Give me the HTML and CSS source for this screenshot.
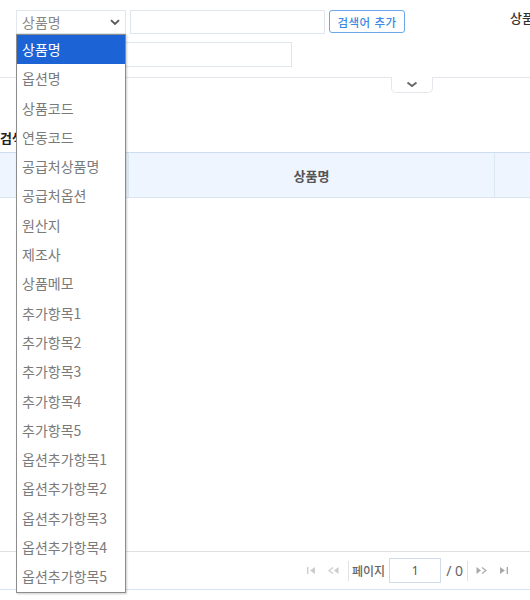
FILE: index.html
```html
<!DOCTYPE html>
<html lang="ko">
<head>
<meta charset="utf-8">
<link rel="stylesheet" href="styles.css">
</head>
<body>
<div class="page">
  <div class="toolbar">
    <div class="select">
      <span class="select-text">상품명</span>
      <svg class="select-chev" width="10" height="7" viewBox="0 0 10 7"><path d="M1 1.2 L5 5 L9 1.2" fill="none" stroke="#555" stroke-width="1.8"/></svg>
    </div>
    <div class="input wide"></div>
    <button class="btn-add">검색어 추가</button>
    <span class="side-label">상품명 검색</span>
  </div>
  <div class="row2">
    <div class="input long"></div>
  </div>
  <div class="fold">
    <div class="fold-tab">
      <svg width="12" height="7" viewBox="0 0 12 7"><path d="M1.5 1.5 L6 5 L10.5 1.5" fill="none" stroke="#666" stroke-width="1.8"/></svg>
    </div>
  </div>
  <div class="section-title">검색 결과</div>
  <div class="grid-head">
    <div class="col c1"></div>
    <div class="col c2">상품명</div>
    <div class="col c3"></div>
  </div>
  <div class="grid-body"></div>
  <div class="pager">
    <span class="pg-icon off">
      <svg width="9" height="7" viewBox="0 0 9 7"><rect x="0" y="0" width="1.4" height="7" fill="#ccc"/><path d="M8 0 L3 3.5 L8 7Z" fill="#ccc"/></svg>
    </span>
    <span class="pg-icon off">
      <svg width="11" height="7" viewBox="0 0 11 7"><path d="M5 0.5 L1 3.5 L5 6.5" fill="none" stroke="#ccc" stroke-width="1.2"/><path d="M10.5 0 L6 3.5 L10.5 7Z" fill="#ccc"/></svg>
    </span>
    <span class="pg-sep"></span>
    <span class="pg-label">페이지</span>
    <div class="pg-input">1</div>
    <span class="pg-total">/ 0</span>
    <span class="pg-sep"></span>
    <span class="pg-icon">
      <svg width="11" height="7" viewBox="0 0 11 7"><path d="M0.5 0 L5 3.5 L0.5 7Z" fill="#aaa"/><path d="M6 0.5 L10 3.5 L6 6.5" fill="none" stroke="#aaa" stroke-width="1.2"/></svg>
    </span>
    <span class="pg-icon">
      <svg width="9" height="7" viewBox="0 0 9 7"><path d="M1 0 L6 3.5 L1 7Z" fill="#aaa"/><rect x="7.6" y="0" width="1.4" height="7" fill="#aaa"/></svg>
    </span>
  </div>

  <ul class="dropdown">
    <li class="selected">상품명</li>
    <li>옵션명</li>
    <li>상품코드</li>
    <li>연동코드</li>
    <li>공급처상품명</li>
    <li>공급처옵션</li>
    <li>원산지</li>
    <li>제조사</li>
    <li>상품메모</li>
    <li>추가항목1</li>
    <li>추가항목2</li>
    <li>추가항목3</li>
    <li>추가항목4</li>
    <li>추가항목5</li>
    <li>옵션추가항목1</li>
    <li>옵션추가항목2</li>
    <li>옵션추가항목3</li>
    <li>옵션추가항목4</li>
    <li>옵션추가항목5</li>
  </ul>
</div>
</body>
</html>
```

FILE: styles.css
```css
html, body {
  margin: 0;
  padding: 0;
  background: #fff;
}
body {
  font-family: "Noto Sans CJK KR", "Noto Sans", sans-serif;
  font-size: 13px;
  color: #333;
}
.page {
  position: relative;
  width: 530px;
  height: 600px;
  overflow: hidden;
}
.toolbar {
  display: flex;
  align-items: flex-start;
  padding: 10px 0 0 16px;
  white-space: nowrap;
}
.toolbar > * {
  flex-shrink: 0;
}
.select {
  box-sizing: border-box;
  width: 110px;
  height: 24px;
  border: 1px solid #e1e7ee;
  display: flex;
  align-items: center;
  justify-content: space-between;
  padding: 0 5px 0 5px;
}
.select-text {
  color: #888;
  font-size: 14px;
}
.input {
  box-sizing: border-box;
  height: 24px;
  border: 1px solid #dfe6ee;
  background: #fff;
}
.input.wide {
  width: 195px;
  margin-left: 4px;
}
.btn-add {
  box-sizing: border-box;
  margin-left: 4px;
  width: 76px;
  height: 23px;
  border: 1px solid #6aa8ea;
  border-radius: 3px;
  background: #fff;
  color: #3c8ae2;
  font-family: "Noto Sans CJK KR", sans-serif;
  font-size: 11.5px;
  font-weight: 500;
  padding: 0;
  letter-spacing: 0.5px;
}
.side-label {
  margin-left: 105px;
  font-size: 13px;
  font-weight: 500;
  color: #333;
  line-height: 16px;
}
.row2 {
  padding: 8px 0 0 16px;
}
.input.long {
  width: 276px;
  height: 25px;
}
.fold {
  margin-top: 10px;
  border-top: 1px solid #e4e8ed;
  display: flex;
}
.fold-tab {
  margin-top: -1px;
  margin-left: 391px;
  box-sizing: border-box;
  width: 42px;
  height: 16px;
  background: #fff;
  border: 1px solid #e4e8ed;
  border-top: none;
  border-radius: 0 0 5px 5px;
  display: flex;
  align-items: center;
  justify-content: center;
}
.section-title {
  margin-top: 36px;
  font-weight: 700;
  font-size: 13px;
  color: #222;
  line-height: 18px;
  height: 23px;
}
.grid-head {
  box-sizing: border-box;
  height: 46px;
  background: #eef5fe;
  border-top: 1px solid #cddcf0;
  border-bottom: 1px solid #dae5f2;
  display: flex;
}
.col {
  display: flex;
  align-items: center;
  justify-content: center;
  font-weight: 700;
  font-size: 13px;
  color: #555;
}
.c1 {
  width: 128px;
  border-right: 1px solid #dde8f5;
}
.c2 {
  width: 365px;
  border-right: 1px solid #dde8f5;
}
.c3 {
  flex: 1;
}
.grid-body {
  height: 353px;
  border-bottom: 1px solid #e0e0e0;
}
.pager {
  box-sizing: border-box;
  height: 38px;
  border-bottom: 1px solid #d8e3f1;
  display: flex;
  align-items: center;
  padding-left: 300px;
}
.pg-icon {
  display: flex;
  align-items: center;
  justify-content: center;
  width: 22px;
  height: 20px;
}
.pg-sep {
  width: 1px;
  height: 20px;
  background: #e2e2e2;
  margin: 0 3px 0 4px;
}
.pg-label {
  color: #666;
  font-size: 12px;
  font-weight: 500;
}
.pg-input {
  box-sizing: border-box;
  width: 52px;
  height: 25px;
  margin-left: 4px;
  border: 1px solid #d0dcec;
  display: flex;
  align-items: center;
  justify-content: center;
  font-family: "Noto Sans", sans-serif;
  font-size: 12px;
  color: #555;
}
.pg-total {
  margin-left: 5px;
  font-family: "Noto Sans", sans-serif;
  font-size: 14px;
  color: #666;
}
.dropdown {
  position: absolute;
  left: 16px;
  top: 34px;
  box-sizing: border-box;
  width: 110px;
  margin: 0;
  padding: 0;
  list-style: none;
  background: #fff;
  border: 1px solid #8c8c8c;
  box-shadow: 1px 1px 2px rgba(0,0,0,0.2);
}
.dropdown li {
  height: 29.3px;
  line-height: 29.3px;
  padding-left: 5px;
  color: #7a7a7a;
  font-size: 14px;
  white-space: nowrap;
}
.dropdown li.selected {
  background: #1c63d5;
  color: #fff;
}
```
